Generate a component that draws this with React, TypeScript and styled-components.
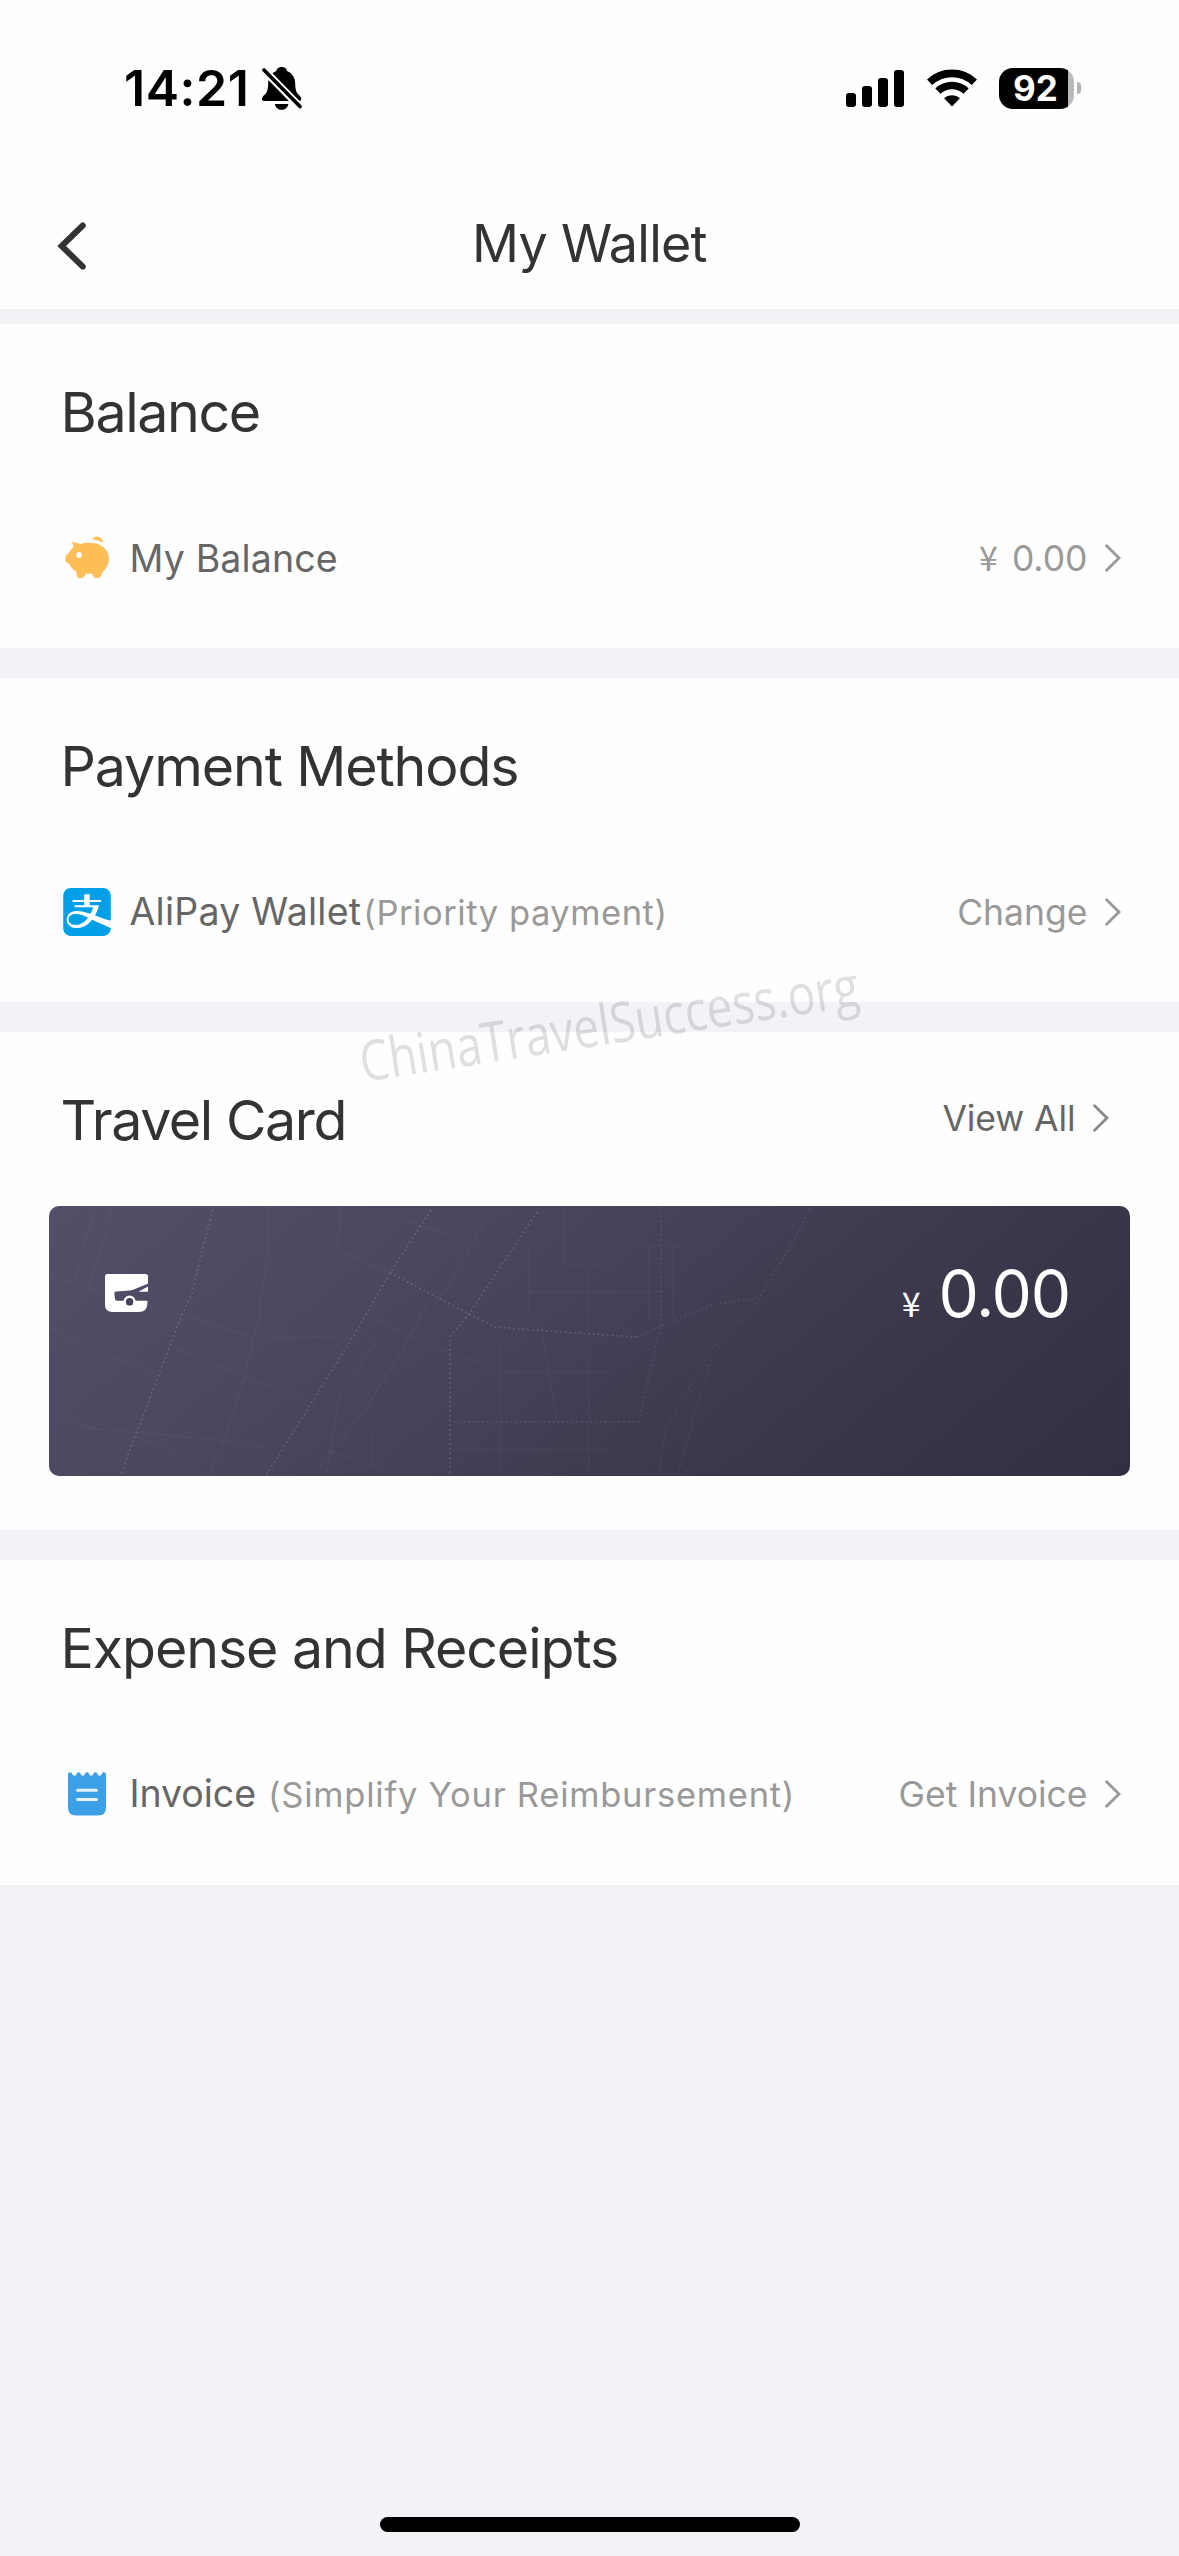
import React from "react";
import styled, { createGlobalStyle } from "styled-components";
import { SiAlipay } from "react-icons/si";

const GlobalStyle = createGlobalStyle`
  *, *::before, *::after { box-sizing: border-box; }
  html, body { margin: 0; padding: 0; background: #f2f2f7; }
  body { font-family: Inter, "Noto Sans", sans-serif; }
  svg { display: block; flex: none; }
`;

const Screen = styled.div`
  position: relative;
  display: flex;
  flex-direction: column;
  width: 1179px;
  height: 2556px;
  overflow: hidden;
  background: #f2f2f7;
`;

/* ---------- status bar ---------- */

const StatusBar = styled.header`
  display: flex;
  align-items: center;
  justify-content: space-between;
  height: 176px;
  padding: 0 98px 0 124px;
  background: #fefefe;
`;

const StatusLeft = styled.div`
  display: flex;
  align-items: center;
  gap: 13px;
`;

const Clock = styled.time`
  font-size: 50px;
  line-height: 60px;
  font-weight: 600;
  letter-spacing: 0.54px;
  color: #000;
`;

const StatusRight = styled.div`
  display: flex;
  align-items: center;
  gap: 22.4px;
`;

const Battery = styled.div`
  display: flex;
  align-items: center;
  gap: 3px;
`;

const BatteryBody = styled.div`
  display: flex;
  align-items: center;
  justify-content: center;
  width: 75px;
  height: 41px;
  padding-right: 2px;
  border-radius: 14px;
  background: linear-gradient(90deg, #000 69px, #b9b9b9 69px);
  color: #fff;
  font-size: 35px;
  font-weight: 700;
  line-height: 41px;
`;

const BatteryNub = styled.div`
  width: 4px;
  height: 12px;
  border-radius: 0 5px 5px 0;
  background: #b4b4b4;
`;

/* ---------- navigation ---------- */

const NavBar = styled.nav`
  display: grid;
  grid-template-columns: 1fr auto 1fr;
  align-items: center;
  height: 133px;
  padding: 2px 56px 0;
  background: #fefefe;
`;

const BackButton = styled.button`
  display: flex;
  justify-self: start;
  padding: 4px 0 0;
  border: 0;
  background: none;
`;

const NavTitle = styled.h1`
  margin: 0;
  font-size: 52px;
  line-height: 64px;
  font-weight: 400;
  letter-spacing: -0.73px;
  color: #333;
`;

/* ---------- sections ---------- */

const Sections = styled.main`
  display: flex;
  flex-direction: column;
  gap: 29.3px;
  padding-top: 14.6px;
`;

const Section = styled.section`
  display: flex;
  flex-direction: column;
  padding: 56px 0 58.8px;
  background: #fefefe;
`;

const CardSection = styled(Section)`
  padding-bottom: 54.5px;
`;

const SectionHead = styled.div`
  display: flex;
  align-items: center;
  justify-content: space-between;
  height: 64px;
  padding: 0 70px 0 60.5px;
`;

const Heading = styled.h2<{ $track: number }>`
  margin: 0;
  font-size: 55.5px;
  line-height: 64px;
  font-weight: 400;
  letter-spacing: ${(p) => p.$track}px;
  color: #333;
`;

const Row = styled.div`
  display: flex;
  align-items: center;
  justify-content: space-between;
  height: 64px;
  margin-top: 82px;
  padding: 0 58px 0 63px;
`;

const RowLead = styled.div`
  display: flex;
  align-items: center;
  gap: 18.5px;
`;

const RowText = styled.div`
  display: flex;
  align-items: baseline;
  padding-top: 2px;
  line-height: 48px;
  white-space: nowrap;
`;

const Label = styled.span<{ $track?: number }>`
  font-size: 37.5px;
  letter-spacing: ${(p) => p.$track ?? 0.15}px;
  color: #666;
`;

const Note = styled.span<{ $gap: number; $track: number }>`
  margin-left: ${(p) => p.$gap}px;
  font-size: 34.5px;
  letter-spacing: ${(p) => p.$track}px;
  color: #999;
`;

const Action = styled.a<{ $dark?: boolean }>`
  display: flex;
  align-items: center;
  gap: 17.5px;
  margin-top: ${(p) => (p.$dark ? -3 : 0)}px;
  font-size: 35.5px;
  line-height: 48px;
  letter-spacing: ${(p) => (p.$dark ? -0.1 : 0)}px;
  color: ${(p) => (p.$dark ? "#666" : "#999")};
  white-space: nowrap;
`;

const ActionText = styled.span`
  display: flex;
  align-items: baseline;
  gap: 14px;
  padding-top: 2px;
`;

const Yen = styled.span`
  font-family: "Noto Sans CJK SC", sans-serif;
  font-size: 34px;
  font-weight: 400;
  line-height: 1;
`;

/* ---------- travel card ---------- */

const TravelCard = styled.div`
  position: relative;
  display: flex;
  align-items: flex-start;
  justify-content: space-between;
  height: 270px;
  margin: 54.2px 49px 0;
  padding: 52px 60px 0 56px;
  border-radius: 10px;
  overflow: hidden;
  background: linear-gradient(140deg, #525069 0%, #4b4960 27%, #434057 50%, #393649 75%, #322f42 100%);
`;

const MapLines = styled.svg`
  position: absolute;
  inset: 0;
`;

const CardMark = styled.div`
  position: relative;
  padding-top: 16px;
`;

const CardAmount = styled.div`
  position: relative;
  display: flex;
  align-items: baseline;
  gap: 19px;
  font-size: 64px;
  line-height: 72px;
  letter-spacing: -1.18px;
  color: #fff;
`;

const Watermark = styled.div`
  position: absolute;
  left: 363px;
  top: 1031.5px;
  font-family: "Open Sans", "Noto Sans", sans-serif;
  font-size: 56px;
  font-weight: 400;
  line-height: 56px;
  white-space: nowrap;
  color: rgba(60, 60, 60, 0.16);
  transform-origin: 0 50px;
  transform: rotate(-8.76deg) scaleX(0.822);
`;

const HomeIndicator = styled.div`
  width: 420px;
  height: 15px;
  margin: auto auto 24px;
  border-radius: 8px;
  background: #000;
`;

/* ---------- icons ---------- */

const BellOff = () => (
  <svg width="40" height="43" viewBox="0 0 40 43">
    <path
      d="M19.7 0C22.6 0 24.6 1.6 25.1 4C30.4 6.3 33 10.6 33.2 16.4C33.4 22.6 34.3 25.5 36.8 27.8C38.5 29.4 39.3 30.6 39.3 32C39.3 33.2 38.5 33.9 37 33.9H2.3C.8 33.9 0 33.1 0 31.9C0 30.4 .9 29.3 2.6 27.7C5.1 25.4 6 22.6 6.2 16.4C6.4 10.6 9 6.3 14.3 4C14.8 1.6 16.8 0 19.7 0Z"
      fill="#000"
    />
    <path d="M12.8 37H26.4C25.6 40.6 23 42.8 19.6 42.8C16.2 42.8 13.6 40.6 12.8 37Z" fill="#000" />
    <path d="M-3 -2L42 44" stroke="#fefefe" strokeWidth="7.6" />
    <path d="M2 3L38 39.6" stroke="#000" strokeWidth="3.6" strokeLinecap="round" />
  </svg>
);

const Signal = () => (
  <svg width="58" height="37" viewBox="0 0 58 37">
    <rect x="0" y="23" width="10" height="14" rx="3" />
    <rect x="16" y="16" width="10" height="21" rx="3" />
    <rect x="32" y="8" width="10" height="29" rx="3" />
    <rect x="48" y="0" width="10" height="37" rx="3" />
  </svg>
);

const Wifi = () => (
  <svg width="50" height="38" viewBox="0 0 50 38" fill="none" stroke="#000">
    <path d="M2.6 13.3A32.6 32.6 0 0 1 47.4 13.3" strokeWidth="7.6" />
    <path d="M10.9 22.2A20.4 20.4 0 0 1 39.1 22.2" strokeWidth="7.4" />
    <path d="M25 37.6L17.1 29.3A11.5 11.5 0 0 1 32.9 29.3Z" fill="#000" stroke="none" />
  </svg>
);

const BackArrow = () => (
  <svg width="32" height="50" viewBox="0 0 32 50" fill="none">
    <path d="M26.8 4.5L5.6 25L26.8 45.6" stroke="#333" strokeWidth="6" strokeLinecap="round" />
  </svg>
);

const Chevron = ({ color = "#999" }: { color?: string }) => (
  <svg width="16" height="28" viewBox="0 0 16 28" fill="none">
    <path d="M1.6 1.8L14 14L1.6 26.2" stroke={color} strokeWidth="2.8" strokeLinecap="round" />
  </svg>
);

const PiggyBank = () => (
  <svg width="48" height="48" viewBox="0 0 48 48">
    <path
      d="M9.3 8.8Q9.2 7.8 10.3 8.1L17.5 10C20.5 8.9 25 8.4 30 8.9C39.5 9.8 45.9 16.6 45.9 24.8C45.9 30.2 43.3 34.8 39.4 38.2L37.7 42.2Q36.6 44.3 33.8 44.3Q31 44.3 30.2 42.2L29.2 40.2Q28.9 39.5 28 39.6Q25.6 39.9 23.3 39.6Q22.5 39.5 22.2 40.2L21.3 42.2Q20.1 44.3 17.4 44.3Q14.5 44.3 13.8 41.8L13 37.3C9.6 35.4 7.3 32.8 6.3 29.8L3.8 28.6Q2.6 28 2.5 26.4V22.6Q2.6 21.2 3.9 20.4L6 18.9C7 16.6 8.6 14.6 10.7 12.9Z"
      fill="#ffbe55"
    />
    <path d="M29.2 5.4C31 2.4 34.2 1.6 37 3.4C39 4.7 40.1 6.6 39.9 9C36.6 6.6 33.2 5.6 29.2 5.4Z" fill="#ffbe55" />
    <circle cx="16" cy="21" r="2.9" fill="#fff" />
  </svg>
);

const Receipt = () => (
  <svg width="48" height="48" viewBox="0 0 48 48">
    <path
      d="M5 4.6Q5 2.3 7.2 2.3Q8.6 2.3 9 3.6Q9.6 5.8 11.4 5.8Q13.2 5.8 13.8 3.6Q14.3 2.3 15.7 2.3Q17 2.3 17.5 3.6Q18.1 5.8 19.8 5.8Q21.5 5.8 22.1 3.6Q22.6 2.3 24 2.3Q25.4 2.3 25.9 3.6Q26.5 5.8 28.2 5.8Q29.9 5.8 30.5 3.6Q31 2.3 32.3 2.3Q33.7 2.3 34.2 3.6Q34.8 5.8 36.6 5.8Q38.4 5.8 39 3.6Q39.4 2.3 40.8 2.3Q43 2.3 43 4.6V37.5Q43 45.5 35 45.5H13Q5 45.5 5 37.5Z"
      fill="#3ba0e6"
    />
    <path d="M14.6 20.2H33.4M14.6 29.4H33.4" stroke="#e6f3fc" strokeWidth="3" strokeLinecap="round" />
  </svg>
);

const CardCar = () => (
  <svg width="43" height="38" viewBox="0 0 43 38">
    <path d="M2.5 0H40.5Q43 0 43 2.5V9.8L28 15.8Q26.5 16.3 25 16.4L11 17.6Q9.3 17.8 9.4 19.4L9.9 24.8Q10.1 26.8 12 26.8H18.8A6 6 0 0 0 30.4 26.8H42.4V29Q42.4 38 33.5 38H7.5Q0 38 0 30.5V2.5Q0 0 2.5 0Z" fill="#fff" />
    <path d="M33.5 17.7L43 12.6V17.7Z" fill="#fff" />
    <path d="M18.6 27.4A6 6 0 0 1 30.6 27.4L30.6 30H18.6Z" fill="#fff" />
    <circle cx="24.6" cy="27.7" r="3.7" fill="#474459" />
  </svg>
);

const StreetMap = () => (
  <MapLines width="1081" height="270" viewBox="0 0 1081 270" fill="none">
    <g stroke="#8b88a2" strokeOpacity="0.08" strokeWidth="1.6">
      <path d="M46 0L24 80M64 0L40 84M0 70L50 84L143 112L200 130L290 131" />
      <path d="M218 0L220 36L210 110L196 168L172 240L160 270" />
      <path d="M0 122L60 150L112 170M126 142L176 162L230 184L262 196" />
      <path d="M0 205L40 222L160 233L215 242M90 232L130 248L145 236" />
      <path d="M292 0L288 44L341 67M330 2L370 20L400 28M440 8L405 70L385 100M380 94L350 150L315 205L270 262" />
      <path d="M316 108L365 132L410 150L455 166H560M330 130L290 190L278 268M325 216L322 262M452 134V268M494 130L508 216M540 62V130M480 40V110M516 0V60H552M580 40H650M600 40V118M624 40V112" />
      <path d="M278 244L330 264M404 244H560M540 150V268M480 86H616" />
    </g>
    <g stroke="#a19eb6" strokeOpacity="0.32" strokeWidth="1.7" strokeDasharray="1.7 3">
      <path d="M164 4L154 41L143 87L132 111L77 254L72 270" />
      <path d="M382 4L341 67L308 124L217 270" />
      <path d="M488 6L420 108L401 131V268" />
      <path d="M341 67L420 108L446 121L500 125L588 131" />
      <path d="M405 216H590" strokeOpacity="0.22" />
      <path d="M588 131L610 121L662 99L710 92L750 26L761 1" strokeOpacity="0.16" />
      <path d="M612 0V121L606 144L590 214" strokeOpacity="0.18" />
      <path d="M710 94L662 144L617 221L610 268M662 154L645 210L629 268" strokeOpacity="0.13" />
    </g>
  </MapLines>
);

export default function App() {
  return (
    <>
      <GlobalStyle />
      <Screen>
        <StatusBar>
          <StatusLeft>
            <Clock>14:21</Clock>
            <BellOff />
          </StatusLeft>
          <StatusRight>
            <Signal />
            <Wifi />
            <Battery>
              <BatteryBody>92</BatteryBody>
              <BatteryNub />
            </Battery>
          </StatusRight>
        </StatusBar>

        <NavBar>
          <BackButton aria-label="Back">
            <BackArrow />
          </BackButton>
          <NavTitle>My Wallet</NavTitle>
        </NavBar>

        <Sections>
          <Section>
            <SectionHead>
              <Heading $track={-1.38}>Balance</Heading>
            </SectionHead>
            <Row>
              <RowLead>
                <PiggyBank />
                <RowText>
                  <Label>My Balance</Label>
                </RowText>
              </RowLead>
              <Action>
                <ActionText>
                  <Yen>¥</Yen>0.00
                </ActionText>
                <Chevron />
              </Action>
            </Row>
          </Section>

          <Section>
            <SectionHead>
              <Heading $track={-1.1}>Payment Methods</Heading>
            </SectionHead>
            <Row>
              <RowLead>
                <SiAlipay size={48} color="#009fe8" />
                <RowText>
                  <Label $track={0.25}>AliPay Wallet</Label>
                  <Note $gap={2} $track={0.55}>(Priority payment)</Note>
                </RowText>
              </RowLead>
              <Action>
                <ActionText>Change</ActionText>
                <Chevron />
              </Action>
            </Row>
          </Section>

          <CardSection>
            <SectionHead>
              <Heading $track={-1.42}>Travel Card</Heading>
              <Action $dark>
                <ActionText>View All</ActionText>
                <Chevron color="#8a8a8a" />
              </Action>
            </SectionHead>
            <TravelCard>
              <StreetMap />
              <CardMark>
                <CardCar />
              </CardMark>
              <CardAmount>
                <Yen>¥</Yen>0.00
              </CardAmount>
            </TravelCard>
          </CardSection>

          <Section>
            <SectionHead>
              <Heading $track={-1.08}>Expense and Receipts</Heading>
            </SectionHead>
            <Row>
              <RowLead>
                <Receipt />
                <RowText>
                  <Label $track={-0.05}>Invoice</Label>
                  <Note $gap={12} $track={0.75}>(Simplify Your Reimbursement)</Note>
                </RowText>
              </RowLead>
              <Action>
                <ActionText>Get Invoice</ActionText>
                <Chevron />
              </Action>
            </Row>
          </Section>
        </Sections>

        <HomeIndicator />
        <Watermark>ChinaTravelSuccess.org</Watermark>
      </Screen>
    </>
  );
}
